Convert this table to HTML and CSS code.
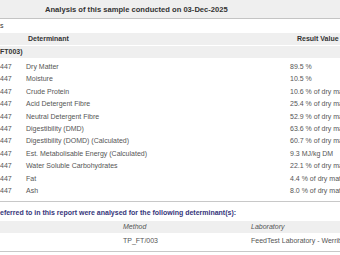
FILE: index.html
```html
<!DOCTYPE html>
<html>
<head>
<meta charset="utf-8">
<link rel="stylesheet" href="styles.css">
</head>
<body>
<div class="page">
  <div class="title-bar">Analysis of this sample conducted on 03-Dec-2025</div>
  <div class="section-label">s</div>
  <div class="results">
    <div class="row head">
      <div></div>
      <div class="det-head">Determinant</div>
      <div class="val-head">Result Value</div>
    </div>
    <div class="row group"><div class="group-name">FT003)</div></div>
    <div class="rows">
      <div class="row"><div>447</div><div>Dry Matter</div><div>89.5 %</div></div>
      <div class="row"><div>447</div><div>Moisture</div><div>10.5 %</div></div>
      <div class="row"><div>447</div><div>Crude Protein</div><div>10.6 % of dry matter</div></div>
      <div class="row"><div>447</div><div>Acid Detergent Fibre</div><div>25.4 % of dry matter</div></div>
      <div class="row"><div>447</div><div>Neutral Detergent Fibre</div><div>52.9 % of dry matter</div></div>
      <div class="row"><div>447</div><div>Digestibility (DMD)</div><div>63.6 % of dry matter</div></div>
      <div class="row"><div>447</div><div>Digestibility (DOMD) (Calculated)</div><div>60.7 % of dry matter</div></div>
      <div class="row"><div>447</div><div>Est. Metabolisable Energy (Calculated)</div><div>9.3 MJ/kg DM</div></div>
      <div class="row"><div>447</div><div>Water Soluble Carbohydrates</div><div>22.1 % of dry matter</div></div>
      <div class="row"><div>447</div><div>Fat</div><div>4.4 % of dry matter</div></div>
      <div class="row"><div>447</div><div>Ash</div><div>8.0 % of dry matter</div></div>
    </div>
  </div>
  <div class="methods">
    <div class="methods-title">eferred to in this report were analysed for the following determinant(s):</div>
    <div class="mrow mhead"><div></div><div>Method</div><div>Laboratory</div></div>
    <div class="mrow"><div></div><div>TP_FT/003</div><div>FeedTest Laboratory - Werribee</div></div>
  </div>
</div>
</body>
</html>
```
FILE: styles.css
```css
html, body {
  margin: 0;
  padding: 0;
  overflow: hidden;
  background: #fff;
}
body {
  width: 340px;
  height: 255px;
  font-family: "Liberation Sans", Arial, sans-serif;
  font-size: 7px;
  color: #555;
}
.page {
  width: 440px;
}
.title-bar {
  height: 18px;
  line-height: 20px;
  background: #efefef;
  border-bottom: 1px solid #c4c4c4;
  padding-left: 45px;
  font-weight: bold;
  font-size: 7.6px;
  color: #333;
  white-space: nowrap;
}
.section-label {
  height: 14px;
  line-height: 14px;
  color: #333;
}
.row {
  display: grid;
  grid-template-columns: 26px 264px 1fr;
  white-space: nowrap;
  height: 12.4px;
  line-height: 12.4px;
}
.row.head {
  height: 12px;
  line-height: 12px;
  background: #efefef;
  font-weight: bold;
  color: #333;
  border-bottom: 1px solid #fff;
}
.det-head {
  padding-left: 2px;
}
.val-head {
  padding-left: 7px;
}
.row.group {
  height: 12px;
  line-height: 12px;
  background: #efefef;
  font-weight: bold;
  color: #333;
}
.group-name {
  grid-column: 1 / 3;
}
.rows {
  padding: 3px 0 4px;
  border-bottom: 1px solid #c8c8c8;
}
.methods-title {
  padding: 5px 0 2px;
  line-height: 12px;
  font-weight: bold;
  color: #35357a;
  white-space: nowrap;
}
.mrow {
  display: grid;
  grid-template-columns: 123px 128px 1fr;
  white-space: nowrap;
  line-height: 12px;
  padding: 2px 0 4px;
  border-bottom: 1px solid #c8c8c8;
}
.mrow.mhead {
  padding: 0;
  border-bottom: 0;
  background: #efefef;
  font-style: italic;
}
```
